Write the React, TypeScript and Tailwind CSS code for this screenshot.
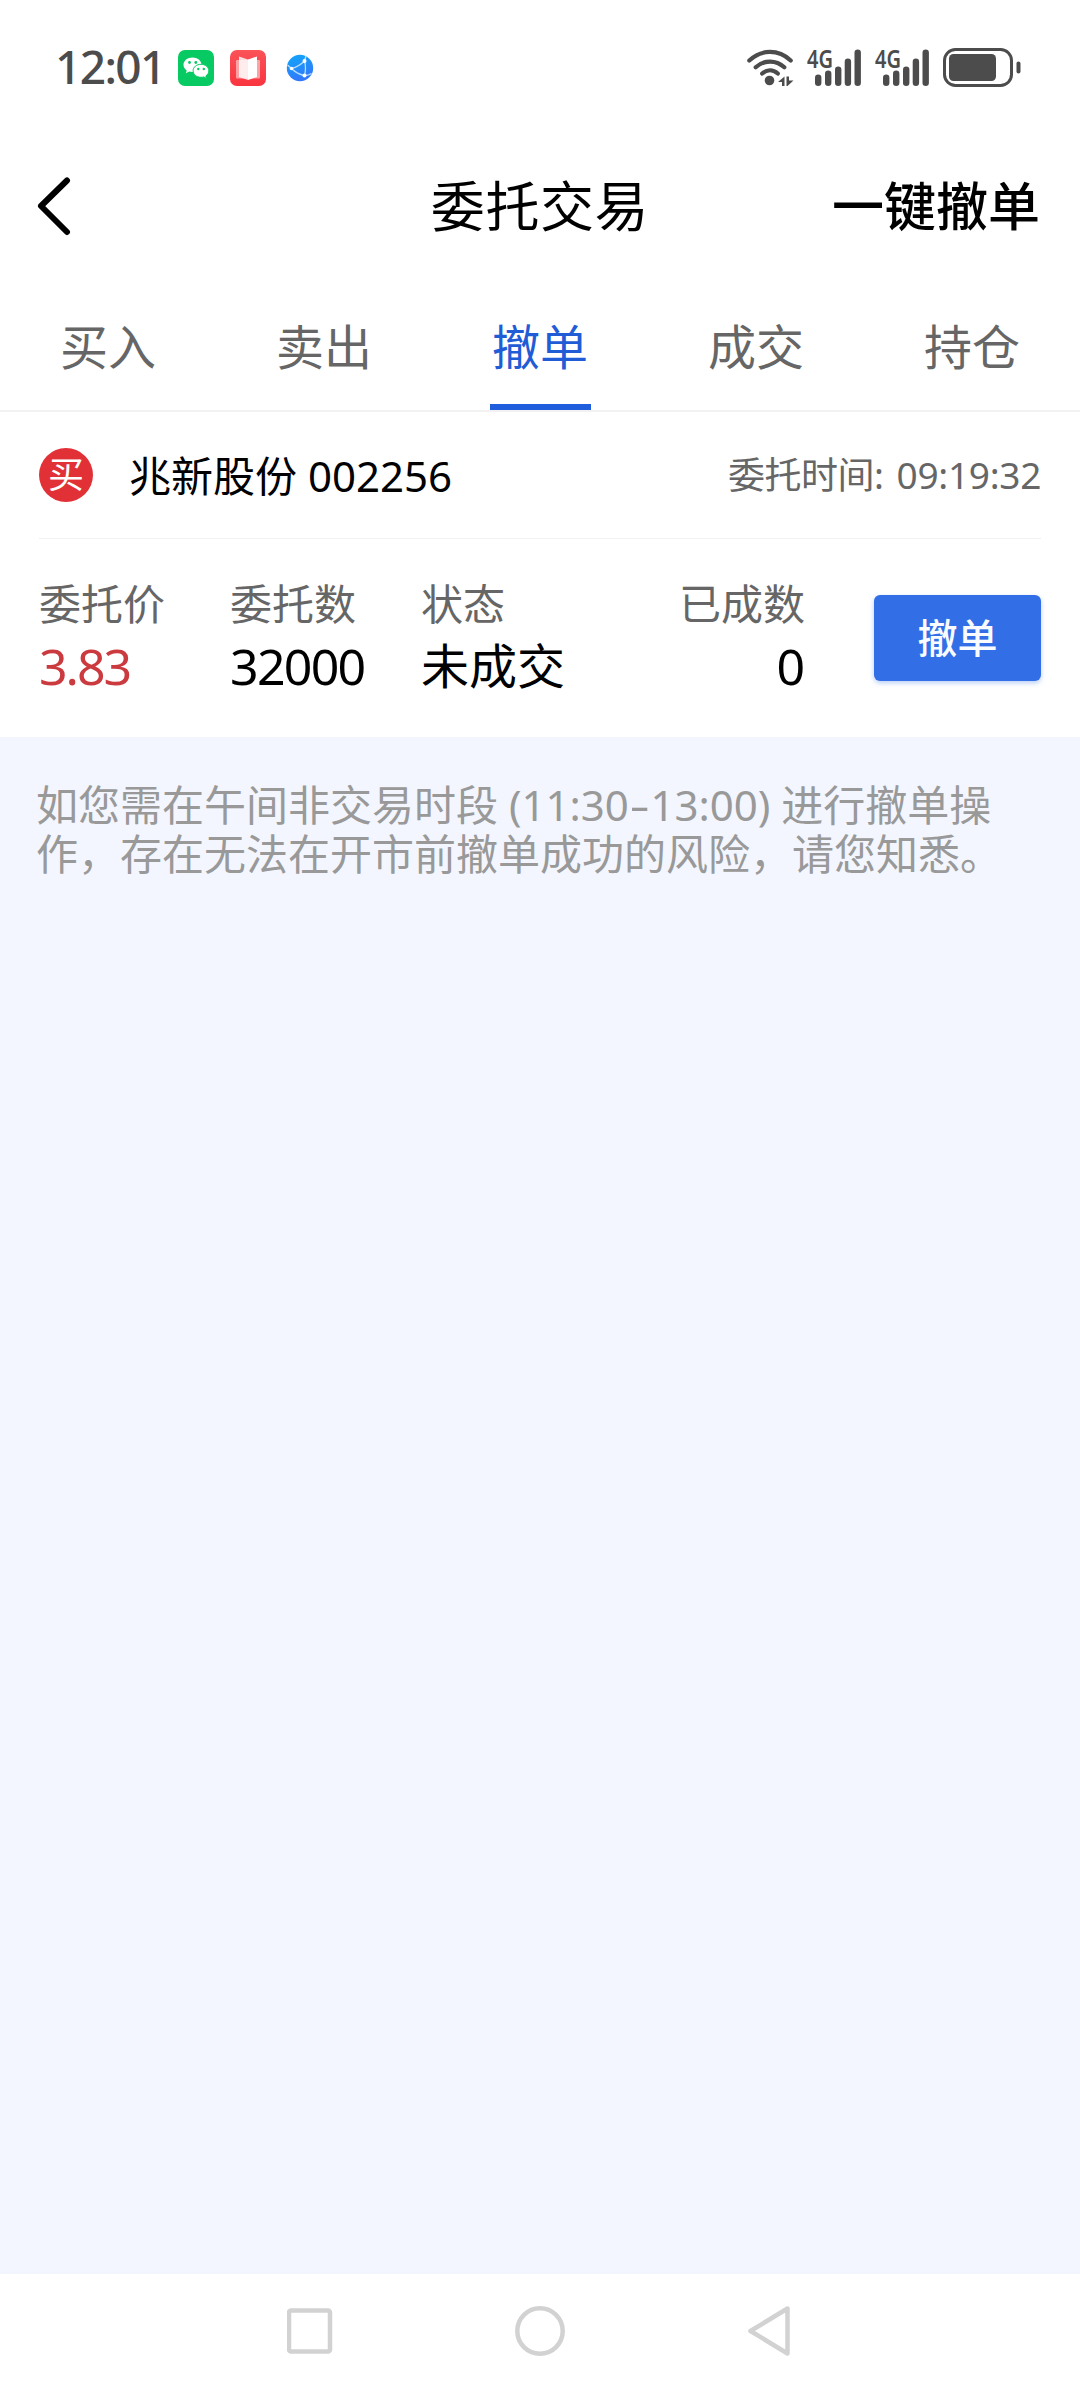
const tabs = ["买入", "卖出", "撤单", "成交", "持仓"];

function WechatIcon() {
  return (
    <svg width="36" height="36" viewBox="0 0 36 36">
      <rect width="36" height="36" rx="7" fill="#07ca63" />
      <path d="M14.500 7.500c-5 0-9 3.200-9 7.300 0 2.300 1.300 4.300 3.200 5.600l-.8 2.900 3.300-1.700c1 .3 2.100.5 3.300.5 5 0 9-3.200 9-7.300s-4-7.300-9-7.300z" fill="#fff" />
      <path d="M23 14.300c-4.500 0-7.900 2.800-7.900 6.500s3.400 6.500 7.900 6.500c1 0 1.900-.1 2.800-.4l2.700 1.500-.6-2.500c1.800-1.200 2.900-3 2.900-5.100 0-3.700-3.400-6.500-7.800-6.500z" fill="#fff" stroke="#07ca63" strokeWidth="1" />
      <g fill="#07ca63">
        <circle cx="11.500" cy="12.500" r="1.400" />
        <circle cx="17.800" cy="12.500" r="1.400" />
        <circle cx="20.300" cy="19" r="1.200" />
        <circle cx="25.800" cy="19" r="1.200" />
      </g>
    </svg>
  );
}

function BookIcon() {
  return (
    <svg width="36" height="36" viewBox="0 0 36 36">
      <defs>
        <linearGradient id="book" x1="0" y1="0" x2="0" y2="1">
          <stop offset="0" stopColor="#fa5358" />
          <stop offset="1" stopColor="#f9343f" />
        </linearGradient>
      </defs>
      <rect width="36" height="36" rx="7" fill="url(#book)" />
      <rect x="6" y="10" width="24" height="18.500" rx="1" fill="#fff" opacity=".5" />
      <path d="M9 6.500l9 3v20.500l-9-3z" fill="#fff" opacity=".8" />
      <path d="M27 6.500l-9 3v20.500l9-3z" fill="#fff" />
    </svg>
  );
}

function GlobeIcon() {
  return (
    <svg width="28" height="28" viewBox="0 0 28 28">
      <defs>
        <linearGradient id="globe" x1="0" y1="0" x2="0.3" y2="1">
          <stop offset="0" stopColor="#10a8fa" />
          <stop offset="1" stopColor="#3278fb" />
        </linearGradient>
      </defs>
      <circle cx="14" cy="14" r="13.200" fill="url(#globe)" />
      <g fill="none" stroke="#b5e0ff" strokeWidth="1.300">
        <path d="M1.500 11L5.500 14.500Q13 12.500 18.500 7Q20.500 14 18.500 21.500Q11 20 5.500 14.500" />
        <path d="M18.500 7l1.500-5M18.500 21.500q4 0 7-2" />
      </g>
      <g fill="#fff">
        <circle cx="5.500" cy="14.500" r="1.800" />
        <circle cx="18.500" cy="7" r="2" />
        <circle cx="18.500" cy="21.500" r="2" />
      </g>
    </svg>
  );
}

function WifiIcon() {
  return (
    <svg width="48" height="38" viewBox="0 0 48 38" fill="none" stroke="#4c4c4c" strokeWidth="4.200" strokeLinecap="round">
      <path d="M2.300 11.500C14.500 .1 31.500 .1 43.700 11.500" />
      <path d="M8.700 18.300C17 10.600 29 10.600 37.300 18.300" />
      <path d="M15.200 24.500C20 20.300 26 20.300 30.800 24.500" />
      <circle cx="22.500" cy="31.500" r="4.800" fill="#4c4c4c" stroke="none" />
      <path d="M37.500 27.500v9.500h-2.500v-4h-4zM39.500 27.500h2.500v4h4.500l-6 5.500h-1z" fill="#4c4c4c" stroke="none" />
    </svg>
  );
}

function SignalIcon() {
  return (
    <svg width="56" height="38" viewBox="0 0 56 38" fill="#4c4c4c" className="overflow-visible">
      <text x="0" y="18.500" fontSize="25" fontWeight="600" textLength="26" lengthAdjust="spacingAndGlyphs" className="font-['Noto_Sans',sans-serif]">4G</text>
      <rect x="8" y="25.500" width="6.400" height="11.500" rx="3.200" />
      <rect x="18" y="21.500" width="6.400" height="15.500" rx="3.200" />
      <rect x="28" y="17.500" width="6.400" height="19.500" rx="3.200" />
      <rect x="37.700" y="9.500" width="6.400" height="27.500" rx="3.200" />
      <rect x="47.500" y="0.500" width="6.400" height="36.500" rx="3.200" />
    </svg>
  );
}

function BatteryIcon() {
  return (
    <svg width="78" height="40" viewBox="0 0 78 40">
      <rect x="1.500" y="1.500" width="67" height="36" rx="11" fill="none" stroke="#4c4c4c" strokeWidth="3" />
      <rect x="6" y="6" width="47" height="27" rx="4.500" fill="#4c4c4c" />
      <rect x="73.500" y="13.500" width="4" height="12" rx="2" fill="#4c4c4c" />
    </svg>
  );
}

function StatusBar() {
  return (
    <div className="flex h-[136px] items-center pr-[59px] pl-[55px] text-[#4c4c4c]">
      <span className="w-[123px] pb-[3px] text-[46px] font-medium tracking-[-1.6px]">12:01</span>
      <div className="flex items-center">
        <WechatIcon />
        <div className="ml-4">
          <BookIcon />
        </div>
        <div className="ml-5">
          <GlobeIcon />
        </div>
      </div>
      <div className="ml-auto flex items-center">
        <WifiIcon />
        <div className="ml-3">
          <SignalIcon />
        </div>
        <div className="ml-3">
          <SignalIcon />
        </div>
        <div className="ml-3">
          <BatteryIcon />
        </div>
      </div>
    </div>
  );
}

function Header() {
  return (
    <header className="grid h-[140px] grid-cols-3 items-center pr-10 pl-9 text-black">
      <svg width="36" height="60" viewBox="0 0 36 60" fill="none" stroke="#000" strokeWidth="6" strokeLinecap="round" strokeLinejoin="round">
        <path d="M31 4.500L5 30l26 26" />
      </svg>
      <h1 className="pl-1 text-center text-[54px] tracking-[0.6px] whitespace-nowrap">委托交易</h1>
      <button className="text-right text-[52px] font-medium whitespace-nowrap">一键撤单</button>
    </header>
  );
}

function Tabs() {
  return (
    <nav className="grid h-[136px] grid-cols-5 border-b-2 border-[#f2f2f2]">
      {tabs.map((tab) => (
        <div key={tab} className="flex flex-col items-center justify-between pt-[35px]">
          <span className={tab === "撤单" ? "text-[48px] text-[#1f5cd6]" : "text-[48px] text-[#666]"}>{tab}</span>
          {tab === "撤单" && <div className="h-1.5 w-[101px] bg-[#1f5ddd]" />}
        </div>
      ))}
    </nav>
  );
}

function Order() {
  return (
    <section className="px-[39px] text-black">
      <div className="flex h-[127px] items-center border-b border-[#f2f2f2]">
        <span className="flex size-[54px] items-center justify-center rounded-full bg-[#e13137] text-[36px] text-white">买</span>
        <span className="ml-9 text-[42px]">兆新股份 002256</span>
        <span className="ml-auto text-[37px] tracking-[-0.5px] text-[#666]">
          委托时间: <span className="ml-1 tracking-[-0.3px]">09:19:32</span>
        </span>
      </div>
      <div className="flex h-[198px] items-start pt-[38px]">
        <div className="w-[191px]">
          <div className="h-[54px] text-[42px] leading-[54px] text-[#666]">委托价</div>
          <div className="text-[50px] leading-[70px] tracking-[-2px] text-[#cb3a3e]">3.83</div>
        </div>
        <div className="w-[191px]">
          <div className="h-[54px] text-[42px] leading-[54px] text-[#666]">委托数</div>
          <div className="text-[50px] leading-[70px] tracking-[-1.700px]">32000</div>
        </div>
        <div className="w-[192px]">
          <div className="h-[54px] text-[42px] leading-[54px] text-[#666]">状态</div>
          <div className="text-[48px] leading-[70px]">未成交</div>
        </div>
        <div className="w-[192px] text-right">
          <div className="h-[54px] text-[42px] leading-[54px] text-[#666]">已成数</div>
          <div className="text-[50px] leading-[70px]">0</div>
        </div>
        <button className="mt-[18px] ml-auto h-[86px] w-[167px] rounded-md bg-[#326fe6] text-[40px] font-medium text-[#f8fcff] shadow-[0_2px_5px_rgba(50,111,230,0.35)]">
          撤单
        </button>
      </div>
    </section>
  );
}

function NavBar() {
  return (
    <footer className="flex h-[114px] items-center justify-center bg-white">
      <svg width="506" height="54" viewBox="0 0 506 54" fill="none" stroke="#d2d2d2" strokeWidth="4.500" strokeLinejoin="round">
        <rect x="2" y="6.500" width="41" height="41" rx="2" />
        <circle cx="253" cy="27" r="22.700" />
        <path d="M500.500 4.500v45L463.500 27z" />
      </svg>
    </footer>
  );
}

export default function App() {
  return (
    <div className="flex h-[2388px] w-[1080px] flex-col bg-white font-['Noto_Sans','Noto_Sans_CJK_SC',sans-serif] leading-[1.5]">
      <StatusBar />
      <Header />
      <Tabs />
      <Order />
      <main className="flex-1 bg-[#f3f6fe] pt-[43px] pl-9 text-[42px] leading-[49px] text-[#999]">
        <p>
          如您需在午间非交易时段 (11:30<span className="mx-1 inline-block scale-x-150">-</span>13:00) 进行撤单操
          <br />
          作，存在无法在开市前撤单成功的风险，请您知悉。
        </p>
      </main>
      <NavBar />
    </div>
  );
}
